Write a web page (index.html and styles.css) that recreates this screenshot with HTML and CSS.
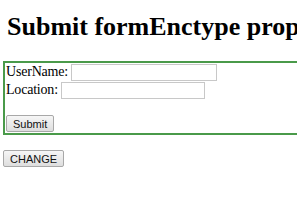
FILE: index.html
```html
<!DOCTYPE html>
<html lang="en">

<head>
	<meta charset="UTF-8">
	<meta name="viewport" content="width=device-width, initial-scale=1.0">
	<title>Submit formEnctype property</title>
	<link rel="stylesheet" href="styles.css">
</head>

<body>
	<h1>Submit formEnctype property</h1>

	<form id="myForm" class="box" action="#" method="post">
		<div class="row">UserName: <input type="text" name="usrname" class="field field-user"></div>
		<div class="row">Location: <input type="text" name="location" class="field field-loc"></div>
		<div class="actions">
			<input type="submit" id="Btn" class="btn" value="Submit">
		</div>
	</form>

	<button class="btn btn-change" onclick="changeEnc()">CHANGE</button>

	<script>
		function changeEnc() {
			document.getElementById('Btn').formEnctype = 'multipart/form-data';
		}
	</script>
</body>

</html>
```

FILE: styles.css
```css
body {
	margin: 0 3px;
	font-family: "Liberation Serif", "Times New Roman", serif;
	font-size: 14px;
	color: #000;
	background: #fff;
	white-space: nowrap;
	overflow: hidden;
}

h1 {
	margin: 12px 0 19px 4px;
	font-size: 26px;
	line-height: 30px;
	overflow: hidden;
}

.box {
	border: 2px solid #4a9a4a;
	padding: 0 1px 1px;
	width: 320px;
}

.row {
	display: flex;
	align-items: center;
	gap: 3px;
	height: 18px;
	letter-spacing: -0.2px;
}

.actions {
	margin-top: 16px;
	height: 17px;
}

.field {
	box-sizing: border-box;
	height: 17px;
	padding: 1px 2px;
	border: 1px solid #c8c8c8;
	font-size: 13px;
	margin: 0;
}

.field-user {
	width: 146px;
}

.field-loc {
	width: 144px;
}

.btn {
	box-sizing: border-box;
	font-family: "Liberation Sans", Arial, sans-serif;
	font-size: 11px;
	color: #111;
	background: linear-gradient(#f6f6f6, #dedede);
	border: 1px solid #a8a8a8;
	border-radius: 2px;
	height: 17px;
	padding: 0 6px;
	margin: 0;
}

.btn-change {
	margin: 15px 0 0;
}
```
